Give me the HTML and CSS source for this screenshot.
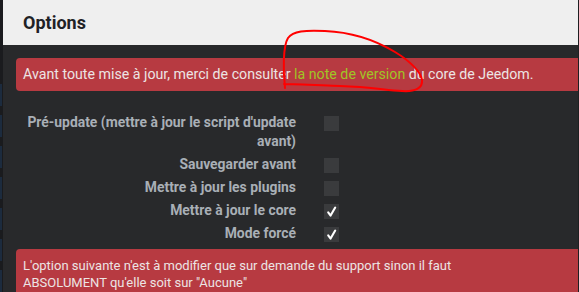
FILE: index.html
```html
<!DOCTYPE html>
<html lang="fr">
<head>
<meta charset="utf-8">
<title>Options</title>
<link rel="stylesheet" href="styles.css">
</head>
<body>
<div class="page">
  <div class="side">
    <span class="nav"></span><span class="nav"></span><span class="nav"></span><span class="nav"></span><span class="nav"></span><span class="nav"></span><span class="nav"></span>
  </div>
  <div class="modal">
    <div class="modal-header">
      <h4 class="title">Options</h4>
    </div>
    <div class="modal-body">
      <div class="alert alert1">Avant toute mise à jour, merci de consulter <a class="link" href="#">la note de version</a> du core de Jeedom.</div>
      <div class="form">
        <div class="row">
          <label class="lbl">Pré-update (mettre à jour le script d'update avant)</label>
          <span class="cb"></span>
        </div>
        <div class="row">
          <label class="lbl">Sauvegarder avant</label>
          <span class="cb"></span>
        </div>
        <div class="row">
          <label class="lbl">Mettre à jour les plugins</label>
          <span class="cb"></span>
        </div>
        <div class="row">
          <label class="lbl">Mettre à jour le core</label>
          <span class="cb"><svg class="chk" viewBox="0 0 15 15"><path d="M4.2 8.3 L6.6 11.6 L11.2 3.6" fill="none" stroke="#ffffff" stroke-width="2.1" stroke-linecap="round" stroke-linejoin="round"/></svg></span>
        </div>
        <div class="row">
          <label class="lbl">Mode forcé</label>
          <span class="cb"><svg class="chk" viewBox="0 0 15 15"><path d="M4.2 8.3 L6.6 11.6 L11.2 3.6" fill="none" stroke="#ffffff" stroke-width="2.1" stroke-linecap="round" stroke-linejoin="round"/></svg></span>
        </div>
      </div>
      <div class="alert alert2"><span class="alert-text">L'option suivante n'est à modifier que sur demande du support sinon il faut ABSOLUMENT qu'elle soit sur "Aucune"</span></div>
    </div>
  </div>
  <svg class="scribble" width="579" height="292" viewBox="0 0 579 292">
    <path d="M285 88 C283 70 283 46 288 38 C293 31 305 30 325 31 C350 32 375 40 395 52 C410 61 421 72 422 80 C423 88 415 92 402 91 C385 90 370 87 340 86 C315 85 295 84 284 84" fill="none" stroke="#ff0000" stroke-width="2" stroke-linecap="round"/>
  </svg>
</div>
</body>
</html>
```
FILE: styles.css
```css
html, body {
  margin: 0;
  padding: 0;
  background: #1c1d20;
  overflow: hidden;
}
.page {
  position: relative;
  display: flex;
  width: 579px;
  height: 292px;
  overflow: hidden;
  font-family: Roboto, "Liberation Sans", sans-serif;
}
.side {
  width: 3px;
  flex: 0 0 3px;
  display: flex;
  flex-direction: column;
  gap: 9px;
  padding-top: 84px;
  background: #1a1b1e;
}
.nav {
  display: block;
  width: 2px;
  height: 23px;
  background: #1c2b3e;
}
.modal {
  flex: 0 0 575px;
  width: 575px;
  background: #28292b;
  overflow: hidden;
  border-right: 1px solid #1e1f21;
}
.modal-header {
  height: 45px;
  background: #efefef;
  display: flex;
  align-items: center;
  padding-left: 20px;
}
.title {
  margin: 0;
  font-size: 18px;
  font-weight: 700;
  color: #1f2226;
  padding-bottom: 1px;
}
.modal-body {
  padding: 13px 0 0 13px;
}
.alert {
  width: 600px;
  background: #b73a41;
  color: #ece4e4;
  font-size: 13px;
  line-height: 17px;
  padding: 8px 7px;
  border-radius: 4px;
}
.alert1 {
  font-size: 14.2px;
}
.link {
  color: #a0c426;
  text-decoration: none;
}
.form {
  display: flex;
  flex-direction: column;
  gap: 4px;
  padding-top: 22px;
  padding-bottom: 6px;
}
.row {
  display: grid;
  grid-template-columns: 280px 15px;
  column-gap: 28px;
  align-items: start;
}
.lbl {
  text-align: right;
  font-size: 13.9px;
  font-weight: 700;
  line-height: 19px;
  color: #a9afb6;
}
.cb {
  width: 15px;
  height: 15px;
  margin-top: 3px;
  background: #3a3b3d;
  display: flex;
  align-items: center;
  justify-content: center;
}
.chk {
  width: 15px;
  height: 15px;
}
.alert-text {
  display: block;
  max-width: 465px;
}
.scribble {
  position: absolute;
  left: 0;
  top: 0;
  pointer-events: none;
}
```
